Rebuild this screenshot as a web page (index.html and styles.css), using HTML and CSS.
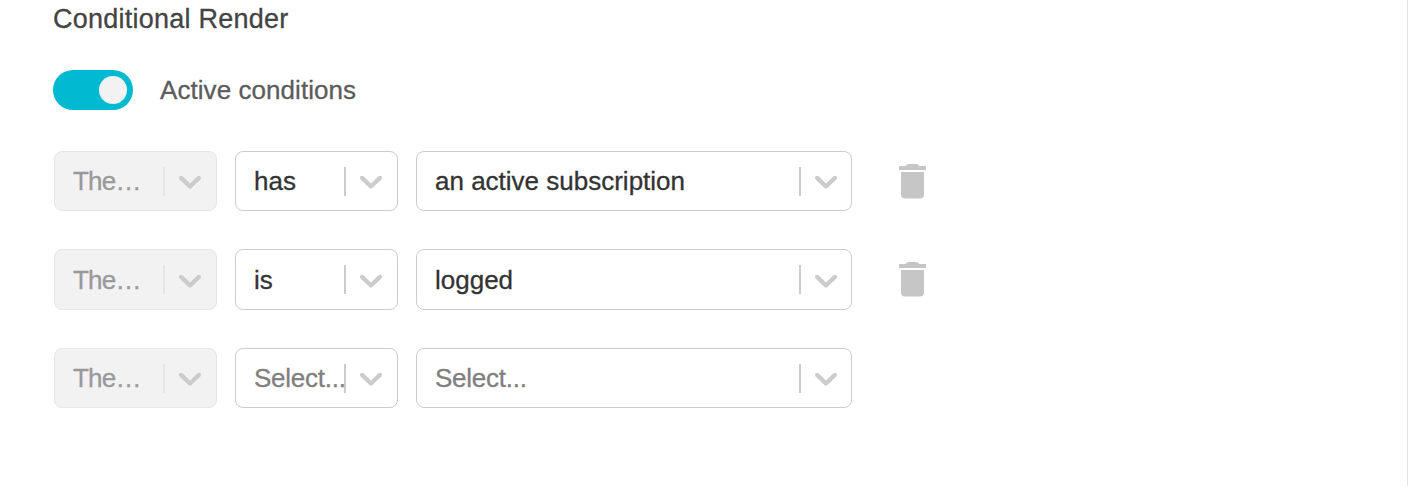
FILE: index.html
```html
<!DOCTYPE html>
<html lang="en">
<head>
    <meta charset="UTF-8">
    <meta name="viewport" content="width=device-width, initial-scale=1.0">
    <title>Conditional Render</title>
    <link rel="stylesheet" href="styles.css">
</head>
<body>

<!-- Shared icons -->
<svg class="icons">
    <symbol id="chevron" viewBox="0 0 20 20">
        <path d="M4.516 7.548c0.436-0.446 1.043-0.481 1.576 0l3.908 3.747 3.908-3.747c0.533-0.481 1.141-0.446 1.574 0 0.436 0.445 0.408 1.197 0 1.615-0.406 0.418-4.695 4.502-4.695 4.502-0.217 0.223-0.502 0.335-0.787 0.335s-0.57-0.112-0.789-0.335c0 0-4.287-4.084-4.695-4.502s-0.436-1.17 0-1.615z"/>
    </symbol>
    <symbol id="trash" viewBox="0 0 27 35">
        <path d="M0 2h6.6C7.4 .7 8.4 0 10 0h7c1.6 0 2.6 .7 3.4 2H27v4H0z"/>
        <path d="M2 8h23v22.5a4 4 0 0 1-4 4H6a4 4 0 0 1-4-4z"/>
    </symbol>
</svg>

<div class="panel">
    <h3 class="title">Conditional Render</h3>

    <div class="toggle-row">
        <span class="toggle"><span class="knob"></span></span>
        <span class="toggle-label">Active conditions</span>
    </div>

    <div class="conditions">
        <div class="condition">
            <div class="select disabled">
                <span class="value">The…</span>
                <svg class="chevron"><use href="#chevron"/></svg>
            </div>
            <div class="select">
                <span class="value">has</span>
                <svg class="chevron"><use href="#chevron"/></svg>
            </div>
            <div class="select wide">
                <span class="value">an active subscription</span>
                <svg class="chevron"><use href="#chevron"/></svg>
            </div>
            <svg class="trash"><use href="#trash"/></svg>
        </div>

        <div class="condition tall">
            <div class="select disabled">
                <span class="value">The…</span>
                <svg class="chevron"><use href="#chevron"/></svg>
            </div>
            <div class="select">
                <span class="value">is</span>
                <svg class="chevron"><use href="#chevron"/></svg>
            </div>
            <div class="select wide">
                <span class="value">logged</span>
                <svg class="chevron"><use href="#chevron"/></svg>
            </div>
            <svg class="trash"><use href="#trash"/></svg>
        </div>

        <div class="condition">
            <div class="select disabled">
                <span class="value">The…</span>
                <svg class="chevron"><use href="#chevron"/></svg>
            </div>
            <div class="select">
                <span class="value placeholder">Select...</span>
                <svg class="chevron"><use href="#chevron"/></svg>
            </div>
            <div class="select wide">
                <span class="value placeholder">Select...</span>
                <svg class="chevron"><use href="#chevron"/></svg>
            </div>
        </div>
    </div>
</div>

</body>
</html>
```
FILE: styles.css
```css
* {
    box-sizing: border-box;
}
body {
    font-family: "Helvetica Neue", "Liberation Sans", Arial, sans-serif;
    font-size: 26px;
    -webkit-text-stroke: 0.3px;
    margin: 0;
    background-color: #fff;
}
.icons {
    display: none;
}
.panel {
    height: 486px;
    padding: 3px 53px 0;
    border-right: 1px solid #e3e3e3;
    overflow: hidden;
}
.title {
    margin: 0;
    font-size: 27px;
    font-weight: normal;
    line-height: 32px;
    color: #444;
    letter-spacing: 0.24px;
}
.toggle-row {
    display: flex;
    align-items: center;
    gap: 27px;
    margin-top: 35px;
}
.toggle {
    display: flex;
    align-items: center;
    justify-content: flex-end;
    width: 80px;
    height: 40px;
    padding: 6px;
    border-radius: 20px;
    background-color: #00bad1;
}
.knob {
    width: 28px;
    height: 28px;
    border-radius: 50%;
    background-color: #f2f2f2;
}
.toggle-label {
    color: #5c5c5c;
    letter-spacing: 0.06px;
}
.conditions {
    display: flex;
    flex-direction: column;
    gap: 38px;
    margin: 41px 0 0 1px;
}
.condition {
    display: flex;
    align-items: center;
    gap: 18px;
    height: 60px;
}
.select {
    display: flex;
    align-items: center;
    width: 163px;
    height: 100%;
    padding: 0 7px 0 18px;
    border: 1px solid #ccc;
    border-radius: 8px;
    color: #333;
}
.select.wide {
    width: 436px;
    padding-right: 6px;
}
.value {
    display: flex;
    align-items: center;
    flex: 1;
    min-width: 0;
    height: 29px;
    border-right: 2px solid #ccc;
    white-space: nowrap;
}
.placeholder {
    color: #808080;
    letter-spacing: -0.25px;
}
.chevron {
    flex: none;
    width: 38px;
    height: 38px;
    margin-left: 6px;
    fill: #ccc;
}
.disabled {
    border-color: #e6e6e6;
    background-color: #f2f2f2;
    color: #999;
}
.disabled .value {
    border-color: #e6e6e6;
    letter-spacing: -0.8px;
}
.tall {
    height: 61px;
}
.tall .value {
    padding-top: 1px;
}
.trash {
    width: 27px;
    height: 35px;
    margin-left: 29px;
    fill: #c6c6c6;
}
.tall .trash {
    margin-bottom: 1px;
}
```
